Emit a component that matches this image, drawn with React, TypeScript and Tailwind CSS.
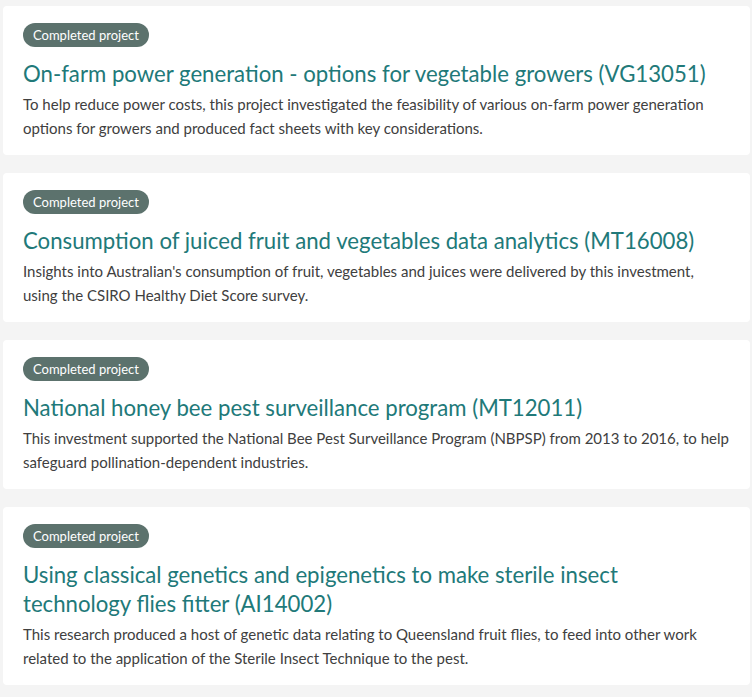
import React from "react";

const items = [
  {
    title: "On-farm power generation - options for vegetable growers (VG13051)",
    desc: "To help reduce power costs, this project investigated the feasibility of various on-farm power generation options for growers and produced fact sheets with key considerations.",
  },
  {
    title: "Consumption of juiced fruit and vegetables data analytics (MT16008)",
    desc: "Insights into Australian's consumption of fruit, vegetables and juices were delivered by this investment, using the CSIRO Healthy Diet Score survey.",
  },
  {
    title: "National honey bee pest surveillance program (MT12011)",
    desc: "This investment supported the National Bee Pest Surveillance Program (NBPSP) from 2013 to 2016, to help safeguard pollination-dependent industries.",
  },
  {
    title: "Using classical genetics and epigenetics to make sterile insect technology flies fitter (AI14002)",
    desc: "This research produced a host of genetic data relating to Queensland fruit flies, to feed into other work related to the application of the Sterile Insect Technique to the pest.",
  },
];

export default function App() {
  return (
    <div
      className="min-h-[697px] bg-[#f4f4f4] pt-[6px] pb-[13px] pl-[3px] pr-[2px] flex flex-col gap-[18px]"
      style={{ fontFamily: "Lato, 'Open Sans', sans-serif" }}
    >
      {items.map((it, i) => (
        <div key={i} className="bg-white rounded-[4px] pt-[16px] pb-[15px] pl-[20px] pr-[19px]">
          <span className="inline-block bg-[#5c726d] text-white text-[13px] leading-[24px] h-[24px] px-[10px] rounded-full">
            Completed project
          </span>
          <h2 className="mt-[12px] text-[22.2px] leading-[29px] text-[#217979]">{it.title}</h2>
          <p className="mt-[4px] text-[15px] leading-[24px] text-[#404040]">{it.desc}</p>
        </div>
      ))}
    </div>
  );
}
